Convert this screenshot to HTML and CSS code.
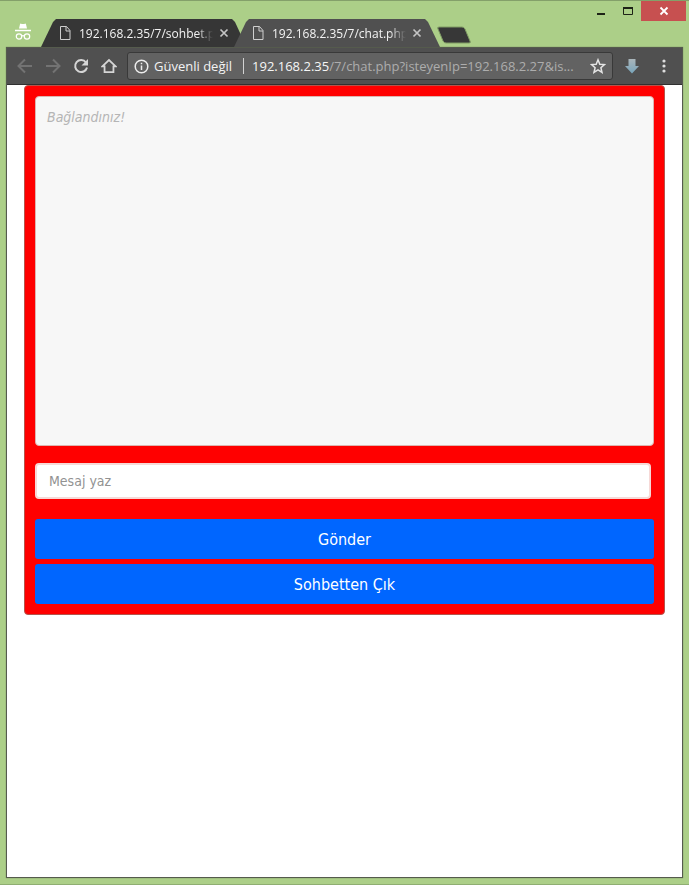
FILE: index.html
```html
<!DOCTYPE html>
<html lang="tr">
<head>
<meta charset="utf-8">
<title>192.168.2.35/7/chat.php</title>
<link rel="stylesheet" href="styles.css">
</head>
<body>
<header class="titlebar">
  <svg class="incognito" width="18" height="18" viewBox="0 0 18 18" aria-hidden="true">
    <path d="M5 5.500 6 1.200q.2-.8 1-.5 2 .7 4 0 .8-.3 1 .5l1 4.300z" fill="#fff"/>
    <path d="M1 7.500h16" stroke="#fff" stroke-width="1.500"/>
    <g fill="none" stroke="#fff" stroke-width="1.200"><circle cx="5" cy="13.500" r="2.700"/><circle cx="13" cy="13.500" r="2.700"/><path d="M7.800 13q1.200-.8 2.400 0"/></g>
  </svg>
  <nav class="tabs" aria-label="Sekmeler">
    <div class="tab">
      <svg class="page" width="12" height="16" viewBox="0 0 12 16" aria-hidden="true"><path d="M1.500 1.500h6l3.500 4v9H1.500zM7 1.500v4.500h4"/></svg>
      <a class="tab-title" href="#sohbet">192.168.2.35/7/sohbet.ph</a>
      <button class="tab-close" aria-label="Sekmeyi kapat"><svg width="10" height="10" viewBox="0 0 10 10"><path d="m1.500 1.500 7 7m0-7-7 7"/></svg></button>
    </div>
    <div class="tab active">
      <svg class="page" width="12" height="16" viewBox="0 0 12 16" aria-hidden="true"><path d="M1.500 1.500h6l3.500 4v9H1.500zM7 1.500v4.500h4"/></svg>
      <a class="tab-title" href="#chat">192.168.2.35/7/chat.php?</a>
      <button class="tab-close" aria-label="Sekmeyi kapat"><svg width="10" height="10" viewBox="0 0 10 10"><path d="m1.500 1.500 7 7m0-7-7 7"/></svg></button>
    </div>
    <button class="new-tab" aria-label="Yeni sekme"><svg width="36" height="18" viewBox="0 0 36 18"><path d="M3 1h23q2 0 3 2l5 12q1 2-1 2H10q-2 0-3-2L2 3q-1-2 1-2z" fill="#373737" stroke="#809c65"/></svg></button>
  </nav>
  <div class="window-controls">
    <button aria-label="Küçült"><svg width="10" height="10" viewBox="0 0 10 10"><path d="M1 8h8" stroke="#1d2316" stroke-width="2"/></svg></button>
    <button aria-label="Büyüt"><svg width="10" height="10" viewBox="0 0 10 10"><path d="M.5 1.500h9v7h-9z" fill="none" stroke="#1d2316"/><path d="M0 2h10" stroke="#1d2316" stroke-width="2"/></svg></button>
    <button class="close" aria-label="Kapat"><svg width="10" height="10" viewBox="0 0 10 10"><path d="m1.500 1.500 7 7m0-7-7 7" stroke="#fff" stroke-width="1.800"/></svg></button>
  </div>
</header>
<div class="window">
  <div class="toolbar">
    <button class="tool dim" aria-label="Geri"><svg width="16" height="16" viewBox="0 0 16 16"><path d="M15 8H2m6-6.500L1.500 8 8 14.500"/></svg></button>
    <button class="tool dim" aria-label="İleri"><svg width="16" height="16" viewBox="0 0 16 16"><path d="M1 8h13M8 1.500 14.500 8 8 14.500"/></svg></button>
    <button class="tool" aria-label="Yenile"><svg width="16" height="16" viewBox="0 0 16 16"><path d="M13 4.500A6 6 0 1 0 14 9.500"/><path d="M15 1v6.500H8.500z" class="solid"/></svg></button>
    <button class="tool" aria-label="Ana sayfa"><svg width="16" height="16" viewBox="0 0 18 16"><path d="M1.500 8.500 9 1.300l7.500 7.200H14V15H4V8.500z"/></svg></button>
    <div class="omnibox">
      <svg class="info" width="15" height="15" viewBox="0 0 15 15" aria-hidden="true"><circle cx="7.500" cy="7.500" r="6.300"/><path d="M7.500 6.500V11M7.500 3.700v1.600"/></svg>
      <span class="security">Güvenli değil</span>
      <span class="url"><b>192.168.2.35</b>/7/chat.php?isteyenIp=192.168.2.27&amp;is...</span>
      <button class="star" aria-label="Yer işareti ekle"><svg width="16" height="16" viewBox="0 0 16 16"><path d="m8 1.800 1.800 4.400 4.700.4-3.600 3.100 1.100 4.600L8 11.800l-4 2.500 1.100-4.600-3.600-3.100 4.700-.4z"/></svg></button>
    </div>
    <button class="tool" aria-label="İndirilenler"><svg width="14" height="16" viewBox="0 0 14 16"><defs><linearGradient id="arrow-fill" x2="0" y2="1"><stop stop-color="#aab5ba"/><stop offset="1" stop-color="#78a5bb"/></linearGradient></defs><path class="download" d="M3.500 1h7v7H14l-7 7.500L0 8h3.500z"/></svg></button>
    <button class="menu" aria-label="Menü"><svg width="4" height="14" viewBox="0 0 4 14"><circle cx="2" cy="2" r="1.600"/><circle cx="2" cy="7" r="1.600"/><circle cx="2" cy="12" r="1.600"/></svg></button>
  </div>
  <main class="page-content">
    <form class="chat">
      <div class="messages" role="log"><em>Bağlandınız!</em></div>
      <input class="message" type="text" placeholder="Mesaj yaz" aria-label="Mesaj yaz">
      <button class="action" type="button">Gönder</button>
      <button class="action" type="button">Sohbetten Çık</button>
    </form>
  </main>
</div>
</body>
</html>
```
FILE: styles.css
```css
* {
  box-sizing: border-box;
}

body {
  margin: 0;
  min-height: 100vh;
  display: flex;
  flex-direction: column;
  background: #accf88;
  border-top: 1px solid #84a06a;
  border-bottom: 1px solid #8fae72;
  padding: 0 6px 6px;
  font-family: "Open Sans", "Noto Sans", sans-serif;
  font-size: 12px;
}

button {
  border: 0;
  padding: 0;
  margin: 0;
  background: none;
  font: inherit;
  display: flex;
  align-items: center;
  justify-content: center;
}

svg {
  display: block;
  flex: none;
}

.titlebar {
  height: 46px;
  display: flex;
  align-items: flex-end;
}

.incognito {
  margin: 0 9px 6px 8px;
}

.tabs {
  flex: 1;
  min-width: 0;
  display: flex;
  align-items: flex-end;
}

.tab {
  width: 200px;
  height: 28px;
  padding: 0 12px 0 18px;
  display: flex;
  align-items: center;
  background: #363636;
  clip-path: polygon(0 100%, 12px 3px, 15px 0, 191px 0, 194px 3px, 100% 16px, 195px 100%);
}

.tab.active {
  margin-left: -7px;
  padding-right: 18px;
  width: 206px;
  background: #505050;
  clip-path: polygon(0 100%, 12px 3px, 15px 0, 191px 0, 194px 3px, 100% 100%);
}

.page {
  fill: none;
  stroke: #cfcfcf;
  stroke-width: 1;
}

.tab-title {
  flex: 1;
  min-width: 0;
  margin-left: 8px;
  overflow: hidden;
  white-space: nowrap;
  color: #f3f3f3;
  text-decoration: none;
  mask-image: linear-gradient(to right, #000 calc(100% - 16px), transparent);
}

.tab-close {
  margin-left: 6px;
  stroke: #c4c4c4;
  stroke-width: 1.7;
}

.new-tab {
  margin: 0 0 3px -4px;
}

.window-controls {
  align-self: flex-start;
  display: flex;
  margin-right: -3px;
}

.window-controls button {
  width: 27px;
  height: 20px;
}

.window-controls .close {
  width: 45px;
  background: #c75050;
}

.window {
  flex: 1;
  display: flex;
  flex-direction: column;
  border: 1px solid #555b4d;
  box-shadow: 0 0 1px #66755a;
  background: #fff;
}

.toolbar {
  height: 37px;
  display: flex;
  align-items: center;
  background: #505050;
  border-bottom: 1px solid #303030;
  padding: 0 16px 0 10px;
  gap: 12px;
}

.tool svg {
  fill: none;
  stroke: #d5d5d5;
  stroke-width: 2;
}

.tool .solid {
  fill: #d5d5d5;
  stroke: none;
}

.tool .download {
  fill: url(#arrow-fill);
  stroke: none;
}

.dim svg {
  stroke: #737373;
}

.menu {
  margin-left: 11px;
  fill: #dedede;
}

.omnibox {
  flex: 1;
  min-width: 0;
  height: 28px;
  display: flex;
  align-items: center;
  padding: 0 6px;
  margin-left: -2px;
  border: 1px solid #393939;
  border-radius: 3px;
  background: #626262;
  color: #f3f3f3;
  font-size: 13px;
}

.info {
  fill: none;
  stroke: #ededed;
  stroke-width: 1.5;
}

.security {
  flex: none;
  margin-left: 5px;
  padding-right: 11px;
  border-right: 1px solid #d2d2d2;
  line-height: 16px;
}

.url {
  flex: 1;
  min-width: 0;
  margin: 0 8px;
  overflow: hidden;
  text-overflow: ellipsis;
  white-space: nowrap;
  color: #adadad;
}

.url b {
  font-weight: 400;
  color: #f6f6f6;
}

.star {
  fill: none;
  stroke: #e5e5e5;
  stroke-width: 1.5;
}

.page-content {
  padding: 0 17px;
}

.chat {
  display: flex;
  flex-direction: column;
  padding: 10px;
  border: 1px solid #b5544c;
  border-radius: 4px;
  background: #f00;
  font-family: "DejaVu Sans Condensed", "Noto Sans", sans-serif;
}

.messages {
  height: 350px;
  padding: 10px 11px;
  border: 1px solid #ddb5b0;
  border-radius: 4px;
  background: #f7f7f7;
  color: #b5b5b5;
  font-size: 14px;
  line-height: 20px;
}

.message {
  height: 36px;
  margin: 17px 3px 20px 0;
  padding: 0 12px;
  border: 2px solid #f6d9d7;
  border-radius: 4px;
  background: #fff;
  font-family: inherit;
  font-size: 14px;
}

.message::placeholder {
  color: #929292;
}

.action {
  height: 40px;
  border-radius: 3px;
  background: #06f;
  color: #fff;
  font-size: 16px;
}

.action + .action {
  margin-top: 5px;
}
```
